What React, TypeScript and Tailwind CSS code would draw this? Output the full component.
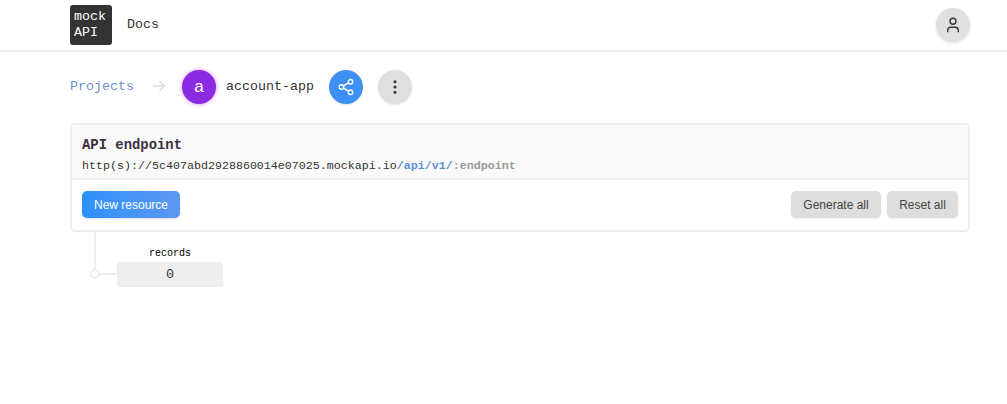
import { CircleUser, MoreVertical, Share2, User } from "lucide-react";

const mono = "font-['Liberation_Mono','DejaVu_Sans_Mono',monospace]";
const sans = "font-['Liberation_Sans',Arial,sans-serif]";

function Header() {
  return (
    <header className="flex h-[52px] items-center justify-between border-b-2 border-[#eeeeee] pr-[37px] pl-[70px]">
      <div className="flex items-center">
        <div className={`flex h-[40px] w-[42px] flex-col rounded-[3px] bg-[#333333] px-[4px] pt-[4px] text-[13.33px] leading-[16px] text-white ${mono}`}>
          <span>mock</span>
          <span>API</span>
        </div>
        <a className={`ml-[15px] text-[13.33px] text-[#333333] ${mono}`}>Docs</a>
      </div>
      <button className="flex h-[34px] w-[34px] items-center justify-center rounded-full bg-[#e0e0e0] shadow-[0_1px_3px_rgba(0,0,0,0.12)]">
        <User size={18} strokeWidth={1.8} color="#333333" />
      </button>
    </header>
  );
}

function Breadcrumb() {
  return (
    <div className={`mt-[18px] flex h-[34px] items-center text-[13.33px] ${mono}`}>
      <a className="w-[65px] text-[#6f8fcf]">Projects</a>
      <svg className="ml-[17px] mb-[2px]" width="14" height="14" viewBox="0 0 14 14" fill="none" stroke="#dddddd" strokeWidth="1.6">
        <path d="M1 7h11M7.5 2l5 5-5 5" />
      </svg>
      <div className={`ml-[16px] flex h-[34px] w-[34px] items-center justify-center rounded-full bg-[#8a2be2] text-[17px] text-white shadow-[0_0_4px_rgba(190,90,240,0.7)] ${sans}`}>
        a
      </div>
      <span className="ml-[10px] w-[88px] text-[#333333]">account-app</span>
      <button className="ml-[15px] flex h-[34px] w-[34px] items-center justify-center rounded-full bg-[#3e90f5] shadow-[0_1px_2px_rgba(0,0,0,0.1)]">
        <Share2 size={18} strokeWidth={1.8} color="#ffffff" />
      </button>
      <button className="ml-[15px] flex h-[34px] w-[34px] items-center justify-center rounded-full bg-[#dfdfdf] shadow-[0_1px_2px_rgba(0,0,0,0.1)]">
        <MoreVertical size={18} strokeWidth={2.2} color="#333333" />
      </button>
    </div>
  );
}

function EndpointCard() {
  return (
    <section className="mt-[19px] h-[109px] w-[900px] overflow-hidden rounded-[5px] border-2 border-[#eeeeee]">
      <div className={`h-[55px] border-b-2 border-[#eeeeee] bg-[#fafafa] px-[10px] pt-[10px] ${mono}`}>
        <h2 className="text-[13.9px] leading-[20px] font-bold text-[#3b3040]">API endpoint</h2>
        <p className="mt-[1px] text-[11.67px] leading-[20px] text-[#333333]">
          http(s)://5c407abd2928860014e07025.mockapi.io
          <b className="text-[#5b8fdc]">/api/v1</b>
          <b className="text-[#5b8fdc]">/</b>
          <b className="text-[#999999]">:endpoint</b>
        </p>
      </div>
      <div className={`flex items-center justify-between px-[10px] pt-[11px] text-[12px] ${sans}`}>
        <button className="h-[27px] w-[98px] rounded-[5px] bg-gradient-to-r from-[#2a91fb] to-[#5b97f0] text-white shadow-[0_1px_2px_rgba(0,0,0,0.12)]">
          New resource
        </button>
        <div className="flex gap-[6px] text-[#444444]">
          <button className="h-[27px] w-[90px] rounded-[5px] bg-[#dddddd] shadow-[0_1px_2px_rgba(0,0,0,0.08)]">Generate all</button>
          <button className="h-[27px] w-[71px] rounded-[5px] bg-[#dddddd] shadow-[0_1px_2px_rgba(0,0,0,0.08)]">Reset all</button>
        </div>
      </div>
    </section>
  );
}

function ResourceTree() {
  return (
    <div className="ml-[20px] flex">
      <div className="flex w-[10px] flex-col items-center">
        <div className="h-[37px] w-[2px] bg-[#eeeeee]" />
        <div className="h-[10px] w-[10px] rounded-full border-2 border-[#eeeeee] bg-white" />
      </div>
      <div className="mt-[41px] h-[2px] w-[17px] bg-[#eeeeee]" />
      <div className={`flex w-[106px] flex-col items-center ${mono}`}>
        <span className="mt-[15px] h-[15px] text-[10px] leading-[13px] text-black">records</span>
        <div className="flex h-[25px] w-full items-center justify-center rounded-[3px] bg-[#eeeeee] text-[13.33px] text-[#333333]">
          0
        </div>
      </div>
    </div>
  );
}

export default function App() {
  return (
    <div className="h-[404px] w-[1007px] overflow-hidden bg-white">
      <Header />
      <main className="pl-[70px]">
        <Breadcrumb />
        <EndpointCard />
        <ResourceTree />
      </main>
    </div>
  );
}
